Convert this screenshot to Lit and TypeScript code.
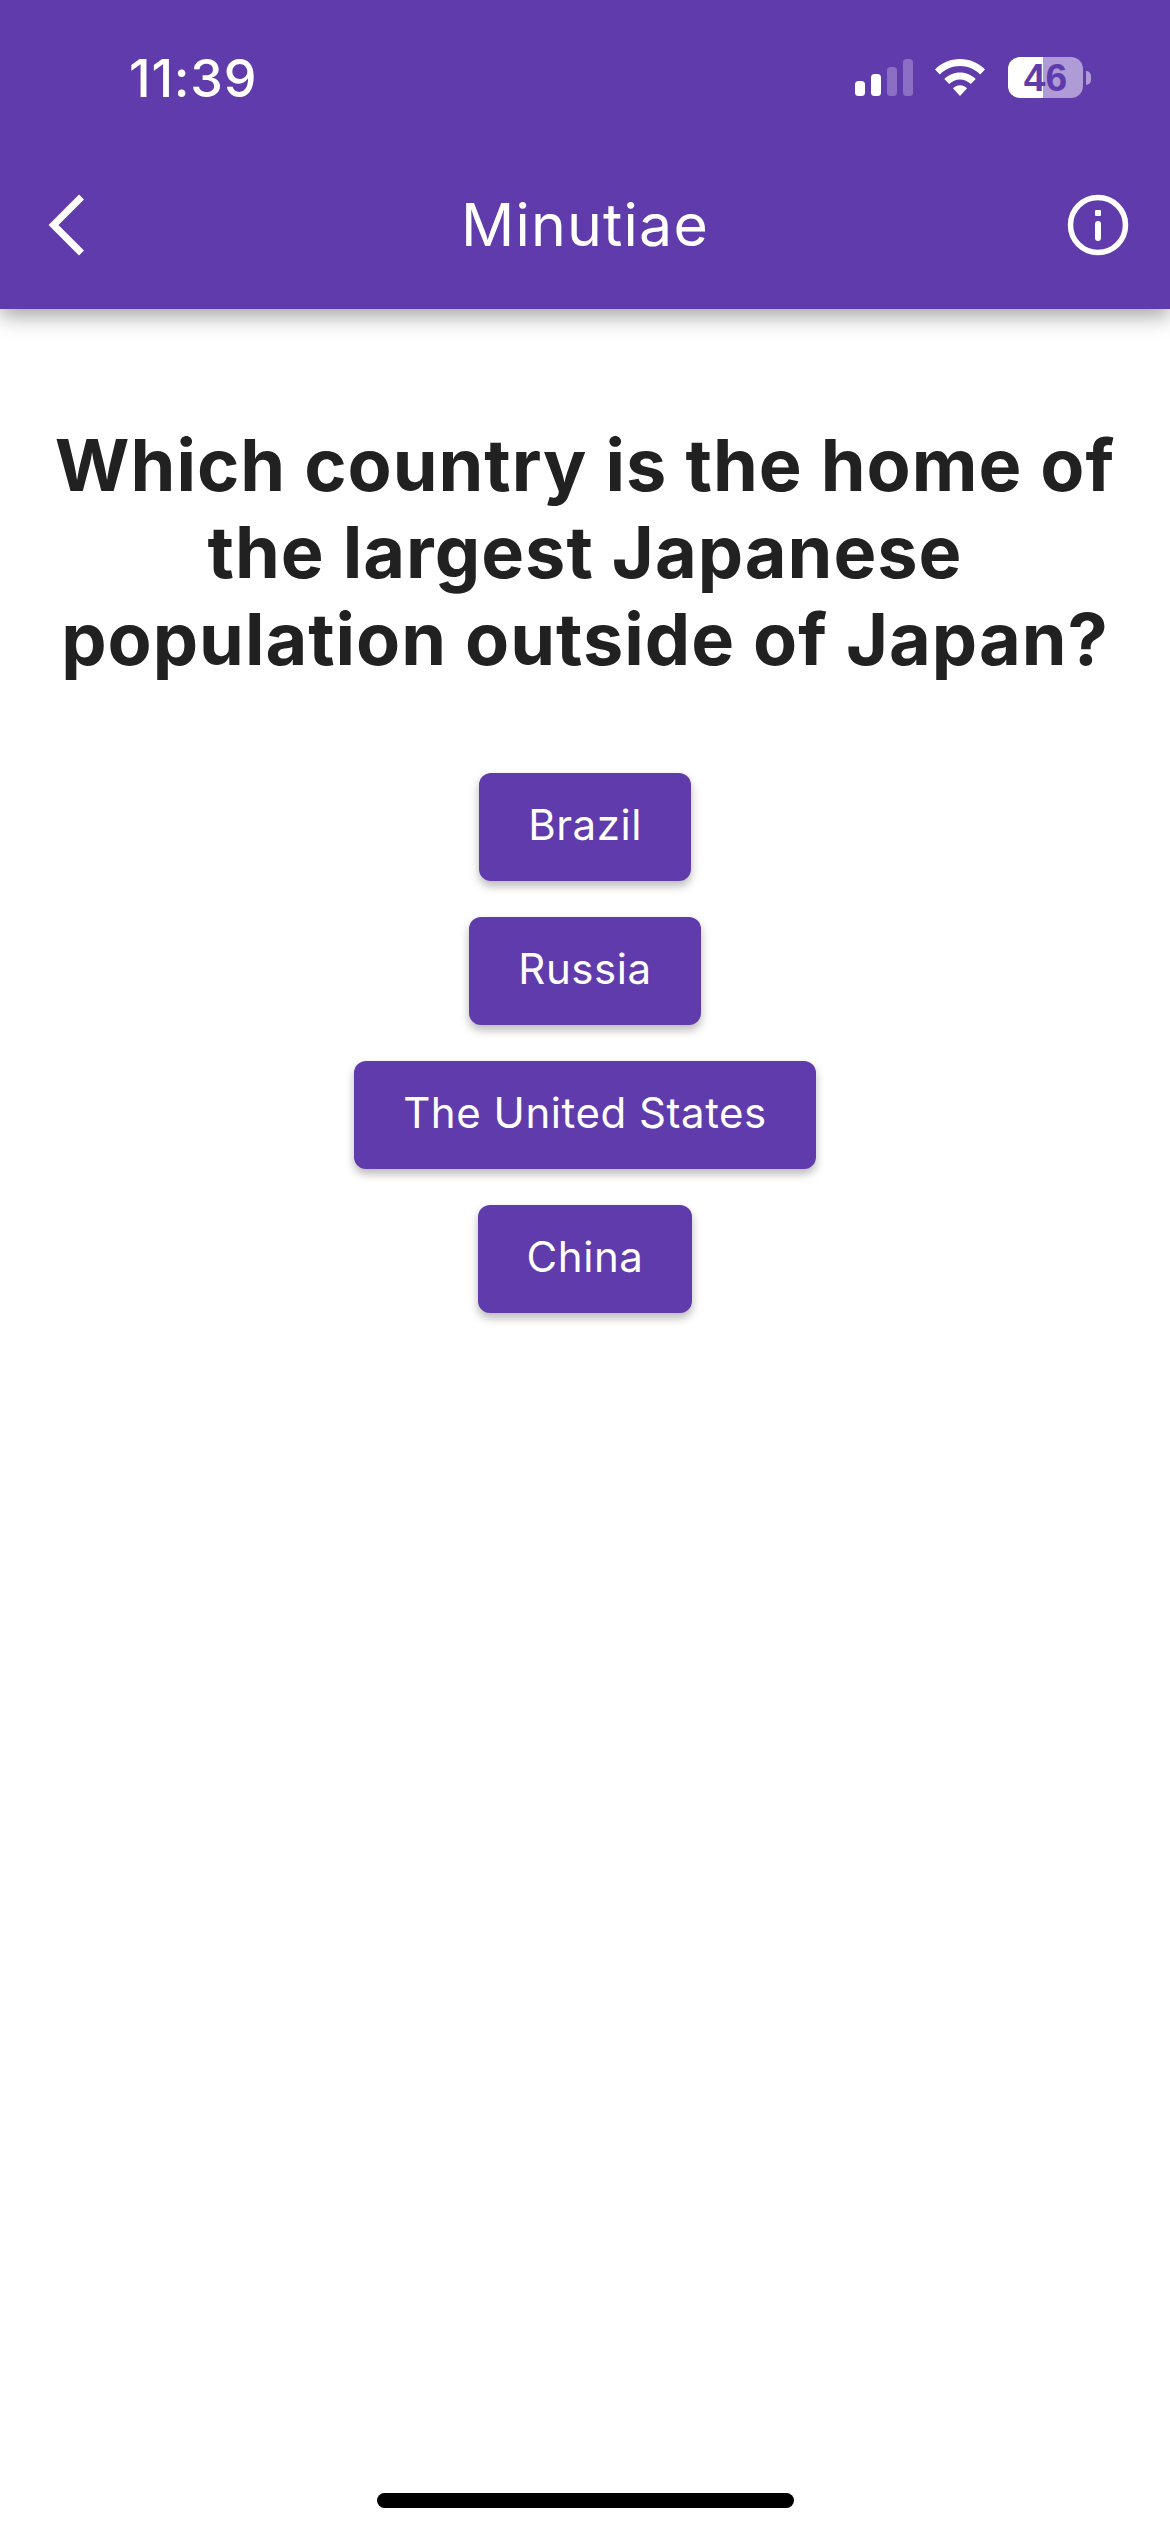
import { LitElement, css, html } from 'lit'

const ANSWERS = ['Brazil', 'Russia', 'The United States', 'China']

export class AppRoot extends LitElement {
  static styles = css`
    :host {
      display: block;
      font-family: Inter, 'Liberation Sans', sans-serif;
      color: #212121;
      background: #fff;
    }

    .page {
      height: 2532px;
      display: flex;
      flex-direction: column;
      align-items: center;
      overflow: hidden;
    }

    /* App bar */
    .header {
      align-self: stretch;
      height: 309px;
      flex: none;
      box-sizing: border-box;
      background: #5f3bab;
      color: #fff;
      box-shadow: 0 7px 20px rgba(0, 0, 0, 0.36);
      display: flex;
      flex-direction: column;
    }

    .status {
      height: 155px;
      flex: none;
      box-sizing: border-box;
      padding: 51px 79px 0 129px;
      display: flex;
      align-items: flex-start;
    }

    .time {
      font-size: 52px;
      font-weight: 500;
      line-height: 56px;
      letter-spacing: 0.8px;
      flex: 1;
    }

    .status-icons {
      display: flex;
      align-items: flex-start;
      padding-top: 6px;
    }

    .signal {
      width: 58px;
      height: 37px;
      margin-right: 22px;
      margin-top: 2px;
    }

    .wifi {
      width: 50px;
      height: 37px;
      margin-right: 23px;
      margin-top: 2px;
    }

    .battery {
      width: 75px;
      height: 41px;
      border-radius: 12px;
      background: linear-gradient(90deg, #fff 0 47%, #af9bd6 47% 100%);
      color: #5f3bab;
      font-family: 'Liberation Sans', sans-serif;
      font-size: 39px;
      font-weight: 700;
      line-height: 41px;
      text-align: center;
    }

    .nub {
      width: 5px;
      height: 14px;
      margin: 14px 0 0 3px;
      border-radius: 0 6px 6px 0;
      background: #af9bd6;
    }

    .toolbar {
      flex: 1;
      display: grid;
      grid-template-columns: 1fr auto 1fr;
      align-items: center;
      padding: 0 40px 14px;
    }

    .toolbar svg {
      display: block;
    }

    .back {
      margin-left: 6px;
    }

    .info {
      justify-self: end;
    }

    .title {
      font-size: 59px;
      font-weight: 400;
      line-height: 70px;
      letter-spacing: 1.2px;
    }

    /* Frage */
    h1 {
      margin: 112px 0 0;
      width: 1110px;
      font-size: 72px;
      font-weight: 700;
      line-height: 87px;
      letter-spacing: 1px;
      text-align: center;
    }

    .answers {
      margin-top: 91px;
      display: flex;
      flex-direction: column;
      align-items: center;
      gap: 36px;
    }

    button {
      height: 108px;
      padding: 0 49px 5px;
      border: 0;
      border-radius: 12px;
      background: #5f3bab;
      color: #fff;
      font: 400 42px Inter, 'Liberation Sans', sans-serif;
      letter-spacing: 0.55px;
      box-shadow: 0 5px 10px rgba(0, 0, 0, 0.28);
    }

    .home-bar {
      margin-top: auto;
      margin-bottom: 24px;
      width: 417px;
      height: 15px;
      border-radius: 8px;
      background: #000;
    }
  `

  render() {
    return html`
      <div class="page">
        <div class="header">
          <div class="status">
            <div class="time">11:39</div>
            <div class="status-icons">
              <svg class="signal" viewBox="0 0 58 37">
                <rect x="0" y="22" width="10" height="15" rx="3.5" fill="#fff" />
                <rect x="16" y="15" width="10" height="22" rx="3.5" fill="#fff" />
                <rect x="32" y="8" width="10" height="29" rx="3.5" fill="#8a6fc4" />
                <rect x="48" y="0" width="10" height="37" rx="3.5" fill="#8a6fc4" />
              </svg>
              <svg class="wifi" viewBox="0 0 50 37" fill="#fff">
                <path d="M0 10.500C6.500 3.800 15.400 0 25 0s18.500 3.800 25 10.500l-4.800 5C40 10.100 32.800 7 25 7S10 10.100 4.800 15.500z" />
                <path d="M9.300 20C13.400 15.800 19 13.400 25 13.400s11.600 2.400 15.700 6.600l-4.800 5C33 22.100 29.100 20.400 25 20.400S17 22.100 14.100 25z" />
                <path d="M18 29.200c1.900-1.900 4.400-2.900 7-2.900s5.100 1 7 2.900L25 37z" />
              </svg>
              <div class="battery">46</div>
              <div class="nub"></div>
            </div>
          </div>
          <div class="toolbar">
            <svg class="back" width="40" height="62" viewBox="0 0 40 62" fill="none" stroke="#fff" stroke-width="7">
              <path d="M35.500 3 7.500 31l28 28" />
            </svg>
            <div class="title">Minutiae</div>
            <svg class="info" width="64" height="64" viewBox="0 0 64 64" fill="none">
              <circle cx="32" cy="32" r="27.500" stroke="#fff" stroke-width="5.500" />
              <rect x="29" y="17" width="6" height="6" rx="1" fill="#fff" />
              <rect x="29" y="28" width="6" height="20" rx="3" fill="#fff" />
            </svg>
          </div>
        </div>

        <h1>Which country is the home of the largest Japanese population outside of Japan?</h1>

        <div class="answers">
          ${ANSWERS.map((a) => html`<button>${a}</button>`)}
        </div>

        <div class="home-bar"></div>
      </div>
    `
  }
}

customElements.define('app-root', AppRoot)
